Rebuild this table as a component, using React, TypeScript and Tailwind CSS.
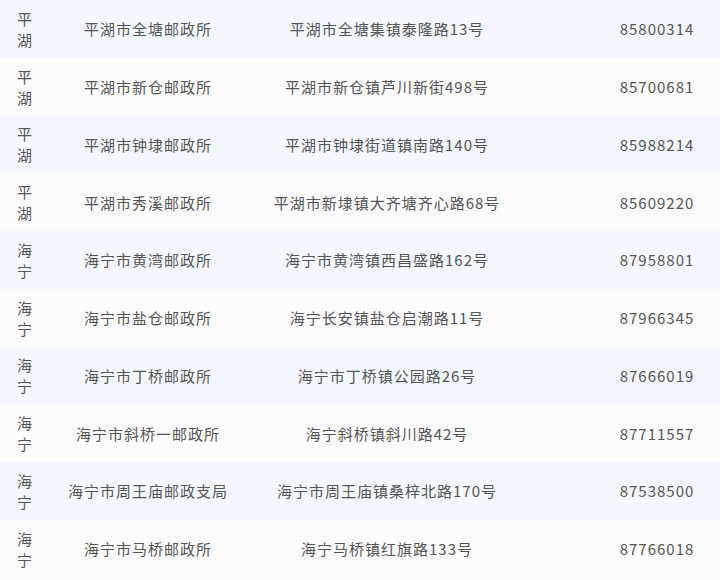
const rows = [
  { area: '平湖', name: '平湖市全塘邮政所', address: '平湖市全塘集镇泰隆路13号', phone: '85800314' },
  { area: '平湖', name: '平湖市新仓邮政所', address: '平湖市新仓镇芦川新街498号', phone: '85700681' },
  { area: '平湖', name: '平湖市钟埭邮政所', address: '平湖市钟埭街道镇南路140号', phone: '85988214' },
  { area: '平湖', name: '平湖市秀溪邮政所', address: '平湖市新埭镇大齐塘齐心路68号', phone: '85609220' },
  { area: '海宁', name: '海宁市黄湾邮政所', address: '海宁市黄湾镇西昌盛路162号', phone: '87958801' },
  { area: '海宁', name: '海宁市盐仓邮政所', address: '海宁长安镇盐仓启潮路11号', phone: '87966345' },
  { area: '海宁', name: '海宁市丁桥邮政所', address: '海宁市丁桥镇公园路26号', phone: '87666019' },
  { area: '海宁', name: '海宁市斜桥一邮政所', address: '海宁斜桥镇斜川路42号', phone: '87711557' },
  { area: '海宁', name: '海宁市周王庙邮政支局', address: '海宁市周王庙镇桑梓北路170号', phone: '87538500' },
  { area: '海宁', name: '海宁市马桥邮政所', address: '海宁马桥镇红旗路133号', phone: '87766018' }
];

export default function App() {
  return (
    <div className="h-[580px] w-[720px] overflow-hidden bg-[#fcfcfd] font-['Noto_Sans_CJK_SC',sans-serif] text-[15px] leading-[21px] tracking-[1px] text-[#555555]">
      <div className="w-[786px]">
        {rows.map((row, i) => (
          <div
            key={row.phone}
            className={`grid h-[57.75px] grid-cols-[50px_196px_282px_258px] items-center text-center ${i % 2 === 0 ? 'bg-[#f4f8fe]' : 'bg-[#fcfcfd]'}`}
          >
            <div className="px-[10px]">{row.area}</div>
            <div className="px-[10px]">{row.name}</div>
            <div className="px-[10px]">{row.address}</div>
            <div className="px-[10px]">{row.phone}</div>
          </div>
        ))}
      </div>
    </div>
  );
}
